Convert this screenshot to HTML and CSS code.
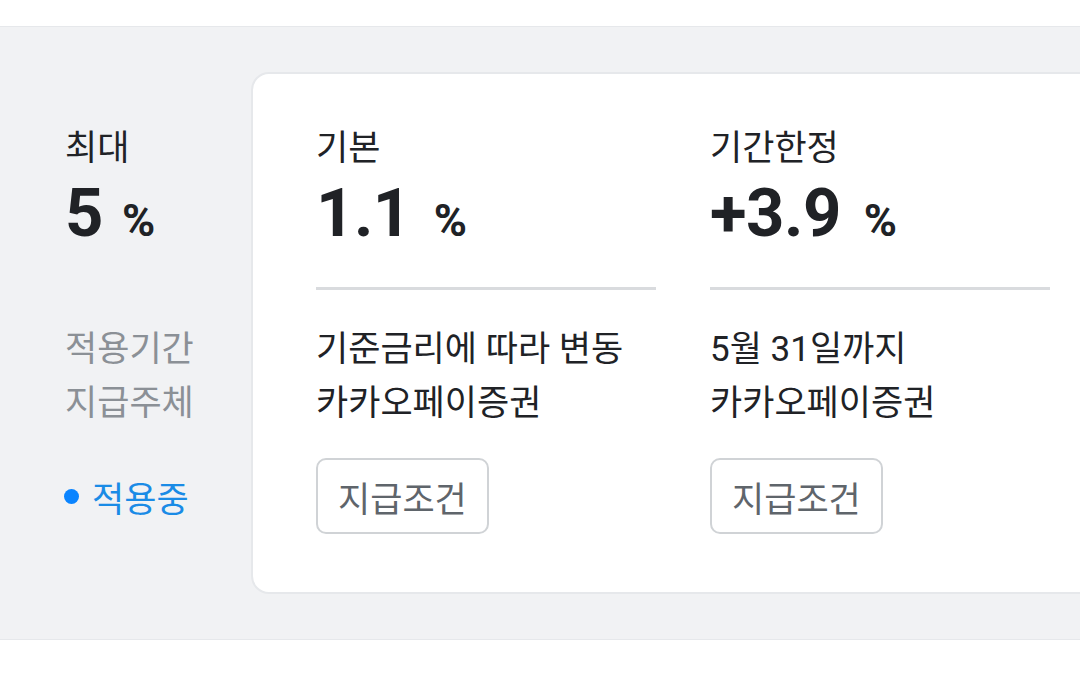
FILE: index.html
```html
<!DOCTYPE html>
<html lang="ko">
<head>
<meta charset="utf-8">
<link rel="stylesheet" href="styles.css">
</head>
<body>
<div class="top"></div>
<section class="band">
  <div class="col side">
    <div class="label">최대</div>
    <div class="value"><span class="num">5</span><span class="pct">%</span></div>
    <div class="divider hidden"></div>
    <div class="info grey">
      <div>적용기간</div>
      <div>지급주체</div>
    </div>
    <div class="status"><span class="dot"></span>적용중</div>
  </div>
  <div class="card">
    <div class="col">
      <div class="label">기본</div>
      <div class="value"><span class="num">1.1</span><span class="pct">%</span></div>
      <div class="divider"></div>
      <div class="info">
        <div>기준금리에 따라 변동</div>
        <div>카카오페이증권</div>
      </div>
      <button class="btn">지급조건</button>
    </div>
    <div class="col">
      <div class="label">기간한정</div>
      <div class="value"><span class="num">+3.9</span><span class="pct">%</span></div>
      <div class="divider"></div>
      <div class="info">
        <div>5월 31일까지</div>
        <div>카카오페이증권</div>
      </div>
      <button class="btn">지급조건</button>
    </div>
  </div>
</section>
<div class="bottom"></div>
</body>
</html>
```
FILE: styles.css
```css
html, body {
  margin: 0;
  padding: 0;
  background: #ffffff;
}
body {
  width: 1080px;
  height: 677px;
  overflow: hidden;
  font-family: Roboto, "Noto Sans CJK KR", sans-serif;
  color: #202226;
}
.top {
  height: 26px;
  background: #ffffff;
}
.band {
  display: flex;
  align-items: flex-start;
  background: #f1f2f4;
  border-top: 1px solid #e6e8eb;
  border-bottom: 1px solid #e6e8eb;
  padding: 45px 0 45px 0;
  overflow: hidden;
}
.side {
  width: 251px;
  flex: none;
  box-sizing: border-box;
  padding: 55px 0 0 65px;
}
.card {
  flex: none;
  width: 920px;
  display: flex;
  gap: 54px;
  background: #ffffff;
  border: 2px solid #e6e8eb;
  border-radius: 18px;
  box-sizing: border-box;
  padding: 53px 0 58px 63px;
}
.card .col {
  width: 340px;
}
.label {
  font-size: 35px;
  line-height: 44px;
  height: 44px;
}
.value {
  display: flex;
  align-items: baseline;
  margin-top: 10px;
  height: 65px;
  line-height: 65px;
}
.num {
  font-size: 67px;
  font-weight: 700;
  letter-spacing: -0.5px;
}
.pct {
  font-size: 45px;
  font-weight: 700;
  margin-left: 23px;
}
.side .pct {
  margin-left: 19px;
}
.divider {
  margin-top: 41px;
  height: 3px;
  background: #d9dbde;
}
.divider.hidden {
  background: transparent;
}
.info {
  margin-top: 33px;
  font-size: 35px;
  line-height: 54px;
}
.info.grey {
  color: #8b9096;
}
.btn {
  display: block;
  margin-top: 27px;
  height: 76px;
  box-sizing: border-box;
  padding: 0 20px;
  background: #ffffff;
  border: 2px solid #d0d3d6;
  border-radius: 10px;
  font-family: Roboto, "Noto Sans CJK KR", sans-serif;
  font-size: 35px;
  color: #5f656b;
}
.status {
  margin-top: 27px;
  height: 76px;
  display: flex;
  align-items: center;
  font-size: 35px;
  color: #1a8be6;
}
.dot {
  width: 15px;
  height: 15px;
  border-radius: 50%;
  background: #0a84ff;
  margin-left: -1px;
  margin-right: 13px;
}
.bottom {
  height: 38px;
  background: #ffffff;
}
```
